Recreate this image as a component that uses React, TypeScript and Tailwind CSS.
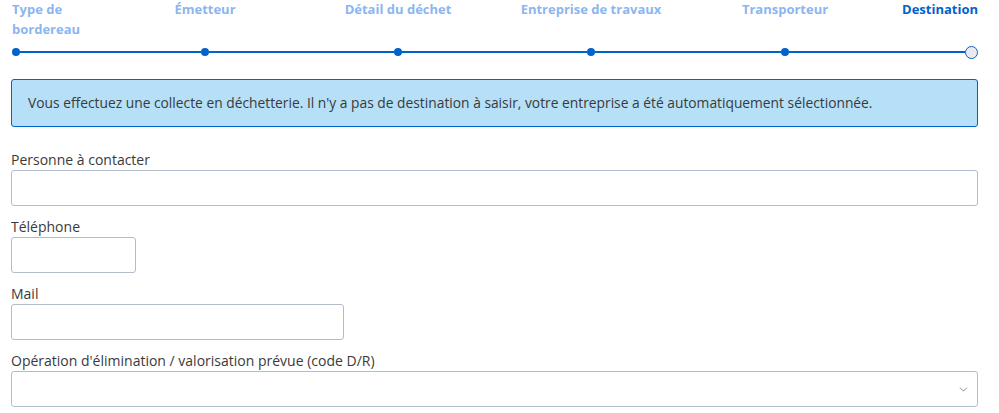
import { ChevronDown } from "lucide-react";

const font = { fontFamily: '"Open Sans", "Noto Sans", sans-serif' };

function Stepper() {
  return (
    <div className="pl-[12px] pr-[21px]">
      {/* labels */}
      <div className="flex h-[45px] text-[13px] font-bold leading-[20px] text-[#8cb6ef]">
        <div className="-mt-[1px] w-[90px]">Type de bordereau</div>
        <div className="-mt-[1px] ml-[23px] w-[160px] text-center">Émetteur</div>
        <div className="-mt-[1px] ml-[33px] w-[160px] text-center">Détail du déchet</div>
        <div className="-mt-[1px] ml-[33px] w-[160px] text-center">Entreprise de travaux</div>
        <div className="-mt-[1px] ml-[34px] w-[160px] text-center">Transporteur</div>
        <div className="-mt-[1px] flex-1 text-right text-[#0063cb]">Destination</div>
      </div>
      {/* track */}
      <div className="flex h-[14px] items-center">
        <span className="h-[8px] w-[8px] shrink-0 rounded-full bg-[#0063cb]" />
        <span className="h-[1.5px] w-[181px] bg-[#0063cb]" />
        <span className="h-[8px] w-[8px] shrink-0 rounded-full bg-[#0063cb]" />
        <span className="h-[1.5px] w-[185px] bg-[#0063cb]" />
        <span className="h-[8px] w-[8px] shrink-0 rounded-full bg-[#0063cb]" />
        <span className="h-[1.5px] w-[185px] bg-[#0063cb]" />
        <span className="h-[8px] w-[8px] shrink-0 rounded-full bg-[#0063cb]" />
        <span className="h-[1.5px] w-[186px] bg-[#0063cb]" />
        <span className="h-[8px] w-[8px] shrink-0 rounded-full bg-[#0063cb]" />
        <span className="h-[1.5px] flex-1 bg-[#0063cb]" />
        <span className="h-[13px] w-[13px] shrink-0 rounded-full border-[1.5px] border-[#0063cb] bg-[#e8ecf2]" />
      </div>
    </div>
  );
}

function Label({ children, className = "" }: { children: React.ReactNode; className?: string }) {
  return (
    <label className={`block text-[14px] leading-[20px] text-[#3a3a3a] ${className}`}>
      {children}
    </label>
  );
}

const inputCls =
  "block h-[36px] rounded-[3px] border border-[#b3bccb] bg-white outline-none";

export default function App() {
  return (
    <div className="h-[413px] w-[999px] overflow-hidden bg-white" style={font}>
      <Stepper />

      <div className="ml-[11px] mr-[21px] mt-[20px] flex h-[48px] items-center rounded-[3px] border border-[#0063cb] bg-[#b5e0f7] pl-[16px] text-[13.8px] text-[#3a3a3a]">
        Vous effectuez une collecte en déchetterie. Il n'y a pas de destination à
        saisir, votre entreprise a été automatiquement sélectionnée.
      </div>

      <div className="pl-[11px] pr-[21px]">
        <Label className="mt-[23px]">Personne à contacter</Label>
        <input className={`${inputCls} w-full`} />

        <Label className="mt-[11px]">Téléphone</Label>
        <input className={`${inputCls} w-[125px]`} />

        <Label className="mt-[11px]">Mail</Label>
        <input className={`${inputCls} w-[333px]`} />

        <Label className="mt-[11px]">Opération d'élimination / valorisation prévue (code D/R)</Label>
        <div className={`${inputCls} flex w-full items-center justify-end pr-[7px]`}>
          <ChevronDown className="h-[13px] w-[13px] text-[#6b7280]" strokeWidth={1.5} />
        </div>
      </div>
    </div>
  );
}
